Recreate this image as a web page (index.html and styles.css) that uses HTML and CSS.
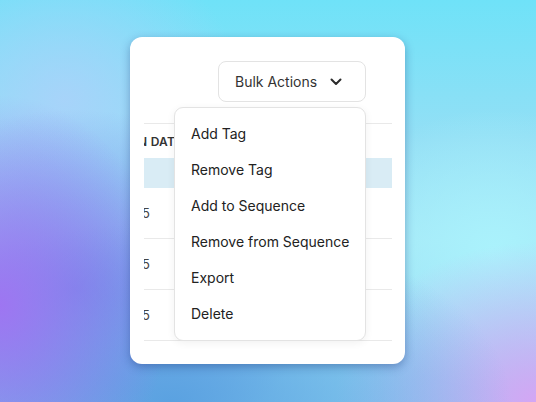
FILE: index.html
```html
<!DOCTYPE html>
<html lang="en">
<head>
<meta charset="UTF-8">
<meta name="viewport" content="width=device-width, initial-scale=1.0">
<title>Contacts - Bulk Actions</title>
<link rel="stylesheet" href="styles.css">
</head>
<body>
  <div class="card">
    <div class="toolbar">
      <div class="bulk">
        <button type="button" class="bulk-btn">
          Bulk Actions
          <svg class="chevron" width="12" height="8" viewBox="0 0 12 8">
            <path d="M1.5 1.5 L6 6 L10.5 1.5" fill="none" stroke="#2b2b2b" stroke-width="2" stroke-linecap="round" stroke-linejoin="round"/>
          </svg>
        </button>
        <ul class="menu">
          <li>Add Tag</li>
          <li>Remove Tag</li>
          <li>Add to Sequence</li>
          <li>Remove from Sequence</li>
          <li>Export</li>
          <li>Delete</li>
        </ul>
      </div>
    </div>

    <div class="table-wrap">
      <div class="table">
        <div class="row head">
          <div class="cell">Join Date</div>
        </div>
        <div class="row selected">
          <div class="cell"></div>
        </div>
        <div class="row">
          <div class="cell">2025</div>
        </div>
        <div class="row">
          <div class="cell">2025</div>
        </div>
        <div class="row">
          <div class="cell">2025</div>
        </div>
      </div>
    </div>
  </div>
</body>
</html>
```

FILE: styles.css
```css
html, body {
  height: 100%;
}
body {
  margin: 0;
  font-family: Inter, "Noto Sans", Arial, sans-serif;
  display: flex;
  align-items: center;
  justify-content: center;
  background-color: #8fdcf5;
  background-image:
    radial-gradient(ellipse 170px 210px at 0% 76%, rgba(160, 115, 242, 0.95), rgba(160, 115, 242, 0) 100%),
    radial-gradient(ellipse 340px 180px at 32% 100%, rgba(88, 160, 224, 0.95), rgba(88, 160, 224, 0) 100%),
    radial-gradient(ellipse 240px 180px at 14% 72%, rgba(110, 130, 232, 0.9), rgba(110, 130, 232, 0) 100%),
    radial-gradient(ellipse 200px 160px at 100% 100%, rgba(212, 166, 244, 1), rgba(212, 166, 244, 0) 100%),
    radial-gradient(ellipse 160px 140px at 92% 62%, rgba(170, 242, 252, 1), rgba(170, 242, 252, 0) 100%),
    radial-gradient(ellipse 180px 160px at 12% 25%, rgba(170, 210, 250, 0.9), rgba(170, 210, 250, 0) 100%),
    linear-gradient(180deg, #6fe2f8 0%, #94dff5 35%, #a4e6f6 60%, #8fd4f2 100%);
}

.card {
  width: 248px;
  height: 280px;
  margin: 0 1px 1px 0;
  padding: 24px 13px 23px 14px;
  background-color: #fff;
  border-radius: 12px;
  box-shadow: 0 3px 10px rgba(20, 40, 110, 0.35);
}

.toolbar {
  display: flex;
  justify-content: flex-end;
  padding-right: 26px;
}
.bulk {
  position: relative;
}
.bulk-btn {
  display: flex;
  align-items: center;
  gap: 13px;
  width: 148px;
  height: 41px;
  padding: 0 0 0 16px;
  font-family: inherit;
  font-size: 14px;
  color: #333;
  background-color: #fff;
  border: 1px solid #e3e3e3;
  border-radius: 8px;
}
.chevron {
  display: block;
}

.menu {
  position: absolute;
  top: 46px;
  right: 0;
  z-index: 2;
  width: 190px;
  margin: 0;
  padding: 8px 0;
  list-style: none;
  background-color: #fff;
  border: 1px solid #e3e3e3;
  border-radius: 9px;
  box-shadow: 0 2px 8px rgba(0, 0, 0, 0.06);
}
.menu li {
  height: 36px;
  line-height: 36px;
  padding-left: 16px;
  font-size: 14px;
  color: #222;
}

.table-wrap {
  margin-top: 21px;
  overflow: hidden;
}
.table {
  margin-left: -26px;
  border-top: 1px solid #e9e9e9;
}
.row {
  display: flex;
  align-items: center;
  height: 50px;
  border-bottom: 1px solid #e9e9e9;
}
.cell {
  font-size: 13px;
  color: #444;
}
.row.head {
  height: 34px;
  border-bottom: none;
}
.row.head .cell {
  font-size: 12px;
  font-weight: 600;
  color: #333;
  text-transform: uppercase;
  letter-spacing: 0.2px;
}
.row.selected {
  height: 30px;
  border-bottom: none;
  background-color: #d9ecf5;
}
```
